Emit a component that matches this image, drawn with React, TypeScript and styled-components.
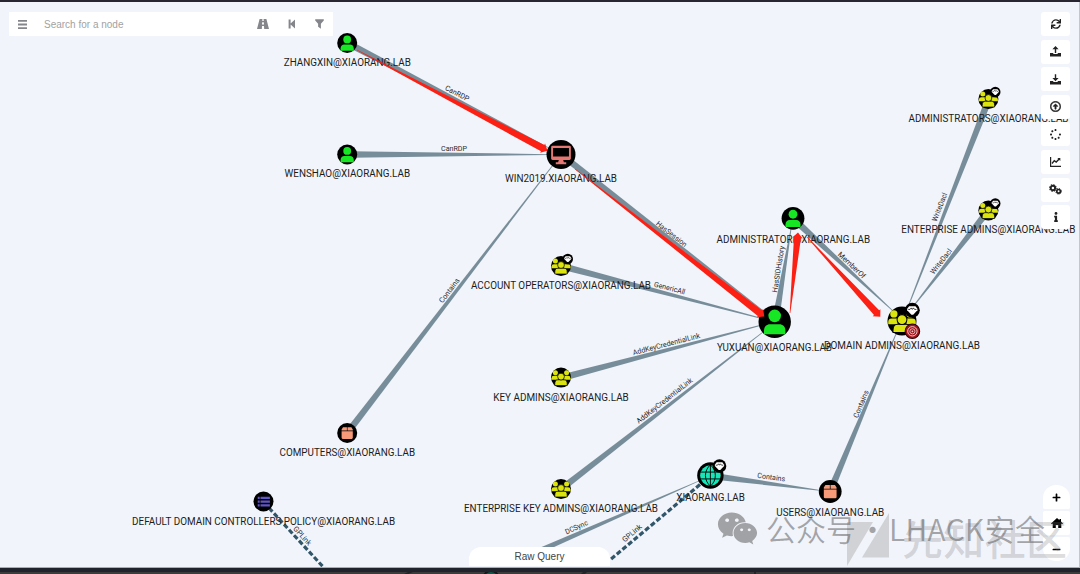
import React from 'react';
import styled, { createGlobalStyle, css } from 'styled-components';
import { FaSync, FaRegArrowAltCircleUp, FaSpinner, FaInfo, FaPlus, FaMinus, FaWeixin } from 'react-icons/fa';

const GlobalStyle = createGlobalStyle`
  body {
    margin: 0;
    overflow: hidden;
    font-family: 'Liberation Sans', Arial, sans-serif;
  }
`;

const Page = styled.div`
  position: relative;
  width: 1080px;
  height: 574px;
  box-sizing: border-box;
  border-top: 2px solid #282631;
  background-color: #f1f4fa;
  display: flex;
  flex-direction: column;
  overflow: hidden;
`;

const Stage = styled.main`
  flex: 1;
  display: flex;
  justify-content: space-between;
  align-items: flex-start;
  padding: 10px 9px 0;
  border-right: 1px solid #c3c6cc;
  border-bottom: 1px solid #a9adb5;
`;

const BottomEdge = styled.footer`
  height: 7px;
  box-sizing: border-box;
  border-top: 4px solid #20232c;
  background-color: #3b3b3b;
`;

const EdgeMarks = styled.svg`
  display: block;
`;

const Canvas = styled.svg`
  position: absolute;
  left: 0;
  top: -2px;
  font-family: Roboto, sans-serif;
`;

const SearchBar = styled.div`
  position: relative;
  width: 324px;
  height: 24px;
  box-sizing: border-box;
  padding: 0 9px 0 9px;
  background-color: white;
  color: #84868c;
  display: flex;
  align-items: center;
  font-size: 10px;
`;

const SearchInput = styled.input`
  flex: 1;
  min-width: 0;
  margin-left: 17px;
  padding: 0;
  border: none;
  outline: none;
  background: none;
  font-family: inherit;
  font-size: 10px;

  &::placeholder {
    color: #a2a2a2;
    opacity: 1;
  }
`;

const SearchActions = styled.div`
  display: flex;
  align-items: center;
  gap: 19px;
`;

const SideColumn = styled.div`
  position: relative;
  height: 555px;
  display: flex;
  flex-direction: column;
  justify-content: space-between;
  align-items: flex-end;
`;

const Menu = styled.div`
  display: flex;
  flex-direction: column;
  gap: 3.6px;
`;

const MenuButton = styled.button`
  width: 29px;
  height: 24px;
  padding: 0;
  border: none;
  border-radius: 3px;
  background-color: white;
  color: #222;
  display: flex;
  align-items: center;
  justify-content: center;
  font-size: 10px;
`;

const ZoomGroup = styled.div`
  margin-bottom: 6px;
  display: flex;
  flex-direction: column;
  gap: 2px;
`;

const ZoomButton = styled.button<{ $round?: 'top' | 'bottom' }>`
  width: 27px;
  height: 24px;
  padding: 0;
  border: none;
  border-radius: 2px;
  background-color: white;
  color: black;
  display: flex;
  align-items: center;
  justify-content: center;
  font-size: 9px;
  ${(p) => p.$round === 'top' && css`border-radius: 13px 13px 2px 2px;`}
  ${(p) => p.$round === 'bottom' && css`border-radius: 2px 2px 13px 13px;`}
`;

const RawQuery = styled.div`
  position: absolute;
  left: 469px;
  bottom: 8px;
  width: 141px;
  height: 19px;
  border-radius: 12px 12px 0 0;
  background-color: white;
  color: #444;
  font-size: 10px;
  line-height: 20px;
  text-align: center;
`;

const Watermark = styled.div`
  position: absolute;
  left: 717px;
  top: 503px;
  display: flex;
  align-items: center;
  color: rgba(95, 95, 95, 0.55);
  font-family: 'Noto Sans CJK SC', sans-serif;
  font-size: 30px;
  font-weight: 350;
  line-height: 46px;
  white-space: nowrap;
`;

const Account = styled.span`
  margin-left: 8px;
`;

const Dot = styled.span`
  width: 33px;
  text-align: center;
`;

const Team = styled.span`
  letter-spacing: 0.4px;
`;

type Kind = 'user' | 'computer' | 'group' | 'ou' | 'gpo' | 'domain';

interface GraphNode {
  x: number;
  y: number;
  r: number;
  kind: Kind;
  label: string;
  // label centre, baseline and width
  text: [number, number, number];
  gem?: [number, number, number];
  target?: [number, number, number];
}

const nodes: GraphNode[] = [
  { x: 347.2, y: 43, r: 10, kind: 'user', label: 'ZHANGXIN@XIAORANG.LAB', text: [347.3, 66.3, 127] },
  { x: 347.2, y: 154.5, r: 10, kind: 'user', label: 'WENSHAO@XIAORANG.LAB', text: [347.3, 177.3, 125.5] },
  { x: 561, y: 154.5, r: 14.5, kind: 'computer', label: 'WIN2019.XIAORANG.LAB', text: [561, 182.3, 112] },
  { x: 347.2, y: 433, r: 10, kind: 'ou', label: 'COMPUTERS@XIAORANG.LAB', text: [347.3, 456.3, 135.5] },
  { x: 263.5, y: 501.5, r: 10, kind: 'gpo', label: 'DEFAULT DOMAIN CONTROLLERS POLICY@XIAORANG.LAB', text: [263.6, 524.9, 263] },
  { x: 561, y: 266, r: 10, kind: 'group', label: 'ACCOUNT OPERATORS@XIAORANG.LAB', text: [561, 289, 180], gem: [567.8, 259, 5.2] },
  { x: 561, y: 377.6, r: 10, kind: 'group', label: 'KEY ADMINS@XIAORANG.LAB', text: [561, 400.8, 135.5] },
  { x: 561, y: 489, r: 10, kind: 'group', label: 'ENTERPRISE KEY ADMINS@XIAORANG.LAB', text: [561, 512.3, 194] },
  { x: 774.7, y: 321.7, r: 16.2, kind: 'user', label: 'YUXUAN@XIAORANG.LAB', text: [774.5, 351.2, 115] },
  { x: 793, y: 218.3, r: 11.4, kind: 'user', label: 'ADMINISTRATOR@XIAORANG.LAB', text: [793.3, 243.3, 153.5] },
  { x: 902, y: 321, r: 14.5, kind: 'group', label: 'DOMAIN ADMINS@XIAORANG.LAB', text: [902, 349, 156], gem: [912.3, 310.3, 7.5], target: [912.4, 331.3, 7.8] },
  { x: 988.4, y: 99, r: 10, kind: 'group', label: 'ADMINISTRATORS@XIAORANG.LAB', text: [988.5, 122.3, 160], gem: [995.3, 92, 5.2] },
  { x: 988.4, y: 210.5, r: 10, kind: 'group', label: 'ENTERPRISE ADMINS@XIAORANG.LAB', text: [988.3, 233.3, 174], gem: [995.3, 203.5, 5.2] },
  { x: 710.4, y: 475.5, r: 13.2, kind: 'domain', label: 'XIAORANG.LAB', text: [710.6, 501.3, 68.5], gem: [719.5, 466, 6.8] },
  { x: 830.2, y: 491.5, r: 11.4, kind: 'ou', label: 'USERS@XIAORANG.LAB', text: [830.3, 516.2, 108] },
];

interface Edge {
  from: [number, number];
  to: [number, number];
  label: string;
  // label centre, angle and width
  text: [number, number, number, number];
  width?: number;
  dashed?: boolean;
}

const edges: Edge[] = [
  { from: [354, 46.5], to: [549, 148], label: 'CanRDP', text: [456, 95.5, 27.5, 26] },
  { from: [352, 154.5], to: [548, 154.6], label: 'CanRDP', text: [454, 151, 0, 26] },
  { from: [348, 432], to: [553, 165], label: 'Contains', text: [451.3, 292, -52.5, 29] },
  { from: [570, 161.5], to: [766, 313], label: 'HasSession', text: [670, 236, 38, 37], width: 6.5 },
  { from: [565, 267], to: [760, 318], label: 'GenericAll', text: [669, 290.5, 14.6, 32] },
  { from: [565, 377], to: [760, 325.5], label: 'AddKeyCredentialLink', text: [667, 346.5, -14.6, 69] },
  { from: [565, 486], to: [763, 332], label: 'AddKeyCredentialLink', text: [666, 402.5, -38, 69] },
  { from: [777, 312], to: [791, 229], label: 'HasSIDHistory', text: [780.8, 269.5, -81, 47] },
  { from: [799, 224], to: [893, 311], label: 'MemberOf', text: [850, 267, 43.5, 35] },
  { from: [987, 104], to: [908, 307], label: 'WriteDacl', text: [942, 208, -69, 30] },
  { from: [984, 216], to: [912, 308], label: 'WriteDacl', text: [943, 263, -52, 30] },
  { from: [832, 487], to: [896, 334], label: 'Contains', text: [863.3, 405, -67.5, 29] },
  { from: [718, 476.7], to: [820, 490.3], label: 'Contains', text: [771, 479.7, 7.6, 28] },
  { from: [522, 558.4], to: [700, 480.5], label: 'DCSync', text: [577.5, 529.5, -24, 24], width: 5.8 },
  { from: [269, 508], to: [326, 570], label: 'GPLink', text: [300.5, 537.5, 48, 23], dashed: true },
  { from: [700, 484.5], to: [610, 560], label: 'GPLink', text: [633.5, 535, -40, 23], dashed: true },
];

const arrows: [number, number, number, number][] = [
  [357, 50, 547.5, 150.7],
  [575, 169, 764.3, 316.5],
  [790, 313, 798, 232.5],
  [807, 237, 880.3, 316.7],
];

function taper([x1, y1]: [number, number], [x2, y2]: [number, number], width: number) {
  const len = Math.hypot(x2 - x1, y2 - y1);
  const nx = -(y2 - y1) / len;
  const ny = (x2 - x1) / len;
  const a = width / 2;
  const b = 0.4;
  return [
    [x1 + nx * a, y1 + ny * a],
    [x2 + nx * b, y2 + ny * b],
    [x2 - nx * b, y2 - ny * b],
    [x1 - nx * a, y1 - ny * a],
  ].map((p) => p.join(',')).join(' ');
}

const Arrow = ({ points: [x1, y1, x2, y2] }: { points: [number, number, number, number] }) => {
  const len = Math.hypot(x2 - x1, y2 - y1);
  const angle = (Math.atan2(y2 - y1, x2 - x1) * 180) / Math.PI;
  const neck = len - 5.5;
  return (
    <path
      transform={`translate(${x1} ${y1}) rotate(${angle})`}
      d={`M0 -.3L${neck} -3.5V-5.2L${len} 0L${neck} 5.2V3.5L0 .3Z`}
      fill='#fb2013'
    />
  );
};

// glyphs are drawn for a circle of radius 10
const glyphs: Record<Kind, React.ReactNode> = {
  user: (
    <g fill='#17e625'>
      <circle cy='-3.6' r='3.9' />
      <path d='M-6.6 7.7V5.5C-6.6 2.8-4.8 1.5-3 1.5H3C4.8 1.5 6.6 2.8 6.6 5.5V7.7Z' />
    </g>
  ),
  computer: (
    <g fill='#e67873'>
      <path fillRule='evenodd' d='M-5.8 -6H5.8Q6.8 -6 6.8 -5V2.8Q6.8 3.8 5.8 3.8H1.5L2 5.3H3.6V6.7H-3.6V5.3H-2L-1.5 3.8H-5.8Q-6.8 3.8-6.8 2.8V-5Q-6.8-6-5.8-6ZM-5.5-4.5V1.3H5.5V-4.5Z' />
    </g>
  ),
  group: (
    <g fill='#dbe40f'>
      <circle cx='-5.6' cy='-4.9' r='2.5' />
      <circle cx='5.6' cy='-4.9' r='2.5' />
      <path d='M-9.5 2.2V.6Q-9.5-1.8-7-1.8H-3V2.2Z' />
      <path d='M9.5 2.2V.6Q9.5-1.8 7-1.8H3V2.2Z' />
      <g stroke='black' strokeWidth='.7'>
        <path d='M-6.2 8V6.3Q-6.2 2.2-3 2.2H3Q6.2 2.2 6.2 6.3V8Z' />
        <circle cy='-1' r='3.4' />
      </g>
    </g>
  ),
  ou: (
    <g fill='#f79a79'>
      <path d='M-4.2-5.8H-.3V-2.4H-5.6V-3.6ZM4.2-5.8H.3V-2.4H5.6V-3.6ZM-5.6-1.7H5.6V4.8Q5.6 5.9 4.5 5.9H-4.5Q-5.6 5.9-5.6 4.8Z' />
    </g>
  ),
  gpo: (
    <g fill='#6255c5'>
      <path d='M-5.8-4.7H-3.8V-2.5H-5.8ZM-3-4.7H6.4V-2.5H-3ZM-5.8-1H-3.8V1.2H-5.8ZM-3-1H6.4V1.2H-3ZM-5.8 2.8H-3.8V5H-5.8ZM-3 2.8H6.4V5H-3Z' />
    </g>
  ),
  domain: (
    <g>
      <circle r='7.8' fill='#17e6b9' />
      <path d='M0-8V8M-8-2.6H8M-8 2.6H8M0-8C-5-4-5 4 0 8M0-8C5-4 5 4 0 8' fill='none' stroke='black' strokeWidth='.7' />
    </g>
  ),
};

const NodeMark = ({ node }: { node: GraphNode }) => (
  <g>
    <g transform={`translate(${node.x} ${node.y}) scale(${node.r / 10})`}>
      <circle r='10' fill='black' />
      {glyphs[node.kind]}
    </g>
    {node.gem && (
      <g transform={`translate(${node.gem[0]} ${node.gem[1]}) scale(${node.gem[2] / 10})`}>
        <circle r='10' fill='black' />
        <path d='M-4.2-5.4H4.2L6.8-2V0L1.2 6H-1.2L-6.8 0V-2Z' fill='white' />
        <path d='M-5.5-1.2H-3L-1.4-3.2L0-1.2L1.4-3.2L3-1.2H5.5' fill='none' stroke='black' strokeWidth='1' />
      </g>
    )}
    {node.target && (
      <g transform={`translate(${node.target[0]} ${node.target[1]}) scale(${node.target[2] / 10})`} fill='none'>
        <circle r='9.3' fill='#a5131b' stroke='#300306' strokeWidth='1.4' />
        <circle r='6' stroke='#f5d7d9' strokeWidth='1.2' />
        <circle r='3.3' stroke='#f5d7d9' strokeWidth='1' />
        <circle r='1.1' fill='#f5d7d9' />
      </g>
    )}
  </g>
);

const Graph = () => (
  <Canvas width='1080' height='567' viewBox='0 0 1080 567'>
    {edges.map((e, i) =>
      e.dashed ? (
        <line
          key={i}
          x1={e.from[0]}
          y1={e.from[1]}
          x2={e.to[0]}
          y2={e.to[1]}
          stroke='#31566a'
          strokeWidth='3.2'
          strokeDasharray='5 2.4'
        />
      ) : (
        <polygon key={i} points={taper(e.from, e.to, e.width ?? 6.6)} fill='#778e9a' />
      )
    )}
    {edges.map((e, i) => (
      <text
        key={i}
        transform={`translate(${e.text[0]} ${e.text[1]}) rotate(${e.text[2]})`}
        textAnchor='middle'
        textLength={e.text[3]}
        lengthAdjust='spacingAndGlyphs'
        fontSize='7.4'
        fill='#2c2c2c'
      >
        {e.label}
      </text>
    ))}
    {nodes.map((n) => (
      <NodeMark key={n.label} node={n} />
    ))}
    {nodes.map((n) => (
      <text
        key={n.label}
        x={n.text[0]}
        y={n.text[1]}
        textAnchor='middle'
        textLength={n.text[2]}
        lengthAdjust='spacingAndGlyphs'
        fontSize='10.9'
        fill='#1c1c1c'
      >
        {n.label}
      </text>
    ))}
    {arrows.map((a, i) => (
      <Arrow key={i} points={a} />
    ))}
  </Canvas>
);

const BarsIcon = () => (
  <svg width='9' height='9' viewBox='0 0 9 9' fill='currentColor'>
    <path d='M0 0H9V1.8H0ZM0 3.6H9V5.4H0ZM0 7.2H9V9H0Z' />
  </svg>
);

const RoadIcon = () => (
  <svg width='12' height='10' viewBox='0 0 12 10' fill='currentColor'>
    <path d='M2.6 0H5.4L5.3 2H6.7L6.6 0H9.4L12 10H7.2L7 7H5L4.8 10H0ZM5.2 3.2L5 5.6H7L6.8 3.2Z' fillRule='evenodd' />
  </svg>
);

const StepBackIcon = () => (
  <svg width='8' height='10' viewBox='0 0 8 10' fill='currentColor'>
    <path d='M.6.5H2.6V4.6L7 .5V9.5L2.6 5.4V9.5H.6Z' />
  </svg>
);

const FilterIcon = () => (
  <svg width='9' height='10' viewBox='0 0 9 10' fill='currentColor'>
    <path d='M.2.3H8.8V1.5L5.9 4.8V9.8L3.1 7.8V4.8L.2 1.5Z' />
  </svg>
);

const Tray = ({ up }: { up?: boolean }) => (
  <svg width='11' height='11' viewBox='0 0 11 11' fill='currentColor'>
    <path d='M0 7H3.3V8H7.7V7H11V10.5H0Z' />
    <path d={up ? 'M5.5 0L8.6 3.2H6.2V7H4.8V3.2H2.4Z' : 'M5.5 7.2L8.6 4H6.2V.3H4.8V4H2.4Z'} />
  </svg>
);

const ChartIcon = () => (
  <svg width='11' height='10' viewBox='0 0 11 10' fill='none' stroke='currentColor'>
    <path d='M.6 0V9.3H11' strokeWidth='1.2' />
    <path d='M2 6.5L4.3 3.6L6.2 5L9.2 2' strokeWidth='1.4' />
    <path d='M7.4 1H10.3V3.9Z' fill='currentColor' stroke='none' />
  </svg>
);

const CogsIcon = () => (
  <svg width='13' height='11' viewBox='0 0 13 11' fill='none' stroke='currentColor'>
    <circle cx='3.9' cy='4' r='2.2' strokeWidth='1.9' />
    <circle cx='3.9' cy='4' r='3.3' strokeWidth='1.1' strokeDasharray='1.4 1.19' />
    <circle cx='9.6' cy='7.3' r='1.8' strokeWidth='1.7' />
    <circle cx='9.6' cy='7.3' r='2.8' strokeWidth='1' strokeDasharray='1.2 1' />
  </svg>
);

const HomeIcon = () => (
  <svg width='12' height='10' viewBox='0 0 12 10' fill='currentColor'>
    <path d='M6 0L8.5 2.2V1H10V3.6L12 5.4L11.2 6.2L10.3 5.5V10H7.2V7H4.8V10H1.7V5.5L.8 6.2L0 5.4Z' />
  </svg>
);

// community logo and name in the bottom right corner
const CommunityMark = () => (
  <Canvas width='1080' height='574' viewBox='0 0 1080 574' pointerEvents='none'>
    <g fill='#777' fillOpacity='.27'>
      <path d='M847 522H873L847 566Z' />
      <path d='M889 513V557.5H862Z' />
      <text
        x='902'
        y='554.5'
        fontFamily="'Noto Sans CJK SC', sans-serif"
        fontSize='41'
        fontWeight='500'
        textLength='165'
      >
        先知社区
      </text>
    </g>
  </Canvas>
);

const menuIcons = [
  <FaSync />,
  <Tray up />,
  <Tray />,
  <FaRegArrowAltCircleUp size={11} strokeWidth={20} stroke='currentColor' />,
  <FaSpinner size={11} />,
  <ChartIcon />,
  <CogsIcon />,
  <FaInfo />,
];

export default function App() {
  return (
    <>
      <GlobalStyle />
      <Page>
        <Graph />
        <Stage>
          <SearchBar>
            <BarsIcon />
            <SearchInput placeholder='Search for a node' />
            <SearchActions>
              <RoadIcon />
              <StepBackIcon />
              <FilterIcon />
            </SearchActions>
          </SearchBar>
          <SideColumn>
            <Menu>
              {menuIcons.map((icon, i) => (
                <MenuButton key={i}>{icon}</MenuButton>
              ))}
            </Menu>
            <ZoomGroup>
              <ZoomButton $round='top'>
                <FaPlus />
              </ZoomButton>
              <ZoomButton>
                <HomeIcon />
              </ZoomButton>
              <ZoomButton $round='bottom'>
                <FaMinus />
              </ZoomButton>
            </ZoomGroup>
          </SideColumn>
        </Stage>
        <BottomEdge>
          <EdgeMarks width='1080' height='3' viewBox='0 0 1080 3'>
            <circle cx='491' cy='7' r='8' fill='#14564a' stroke='#15181a' strokeWidth='2' />
            <path d='M402 3L408 0H413L406 3ZM580 3L583 0H587L584 3ZM754 0H756V3H754Z' fill='#222428' />
          </EdgeMarks>
        </BottomEdge>
        <RawQuery>Raw Query</RawQuery>
        <CommunityMark />
        <Watermark>
          <FaWeixin size={41} />
          <Account>公众号</Account>
          <Dot>·</Dot>
          <Team>LHACK安全</Team>
        </Watermark>
      </Page>
    </>
  );
}
